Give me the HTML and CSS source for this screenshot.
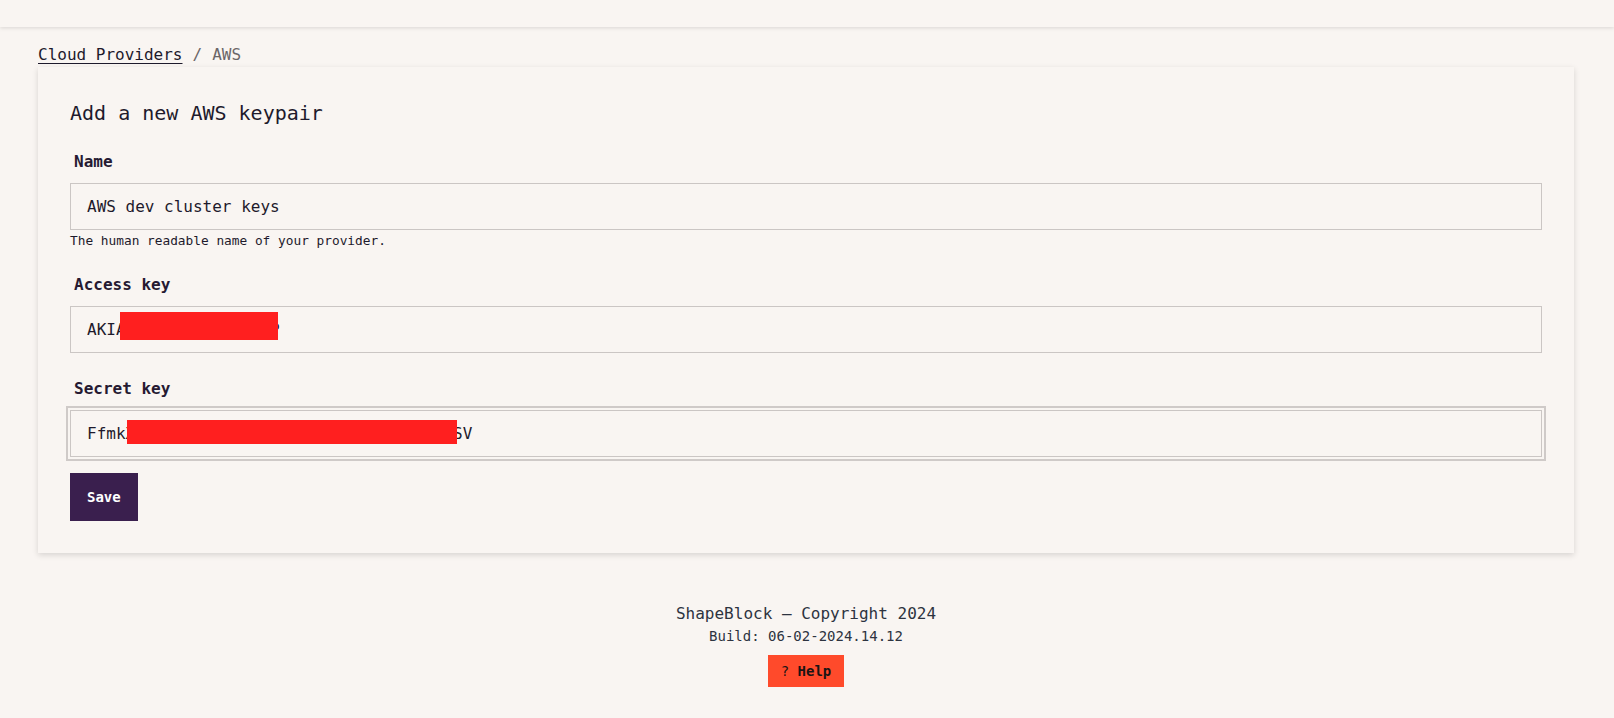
FILE: index.html
```html
<!DOCTYPE html>
<html lang="en">
<head>
<meta charset="utf-8">
<title>AWS keypair</title>
<link rel="stylesheet" href="styles.css">
</head>
<body>
<header class="topbar">
  <nav class="topnav">
    <span>Dashboard</span><span>Clusters</span><span>Services</span><span>Applications</span><span>Cloud Providers</span><span>Support</span>
  </nav>
</header>
<main class="main">
  <div class="breadcrumb"><a href="#" class="crumb-link">Cloud Providers</a><span class="crumb-sep">/</span><span class="crumb-current">AWS</span></div>
  <section class="card">
    <h1 class="card-title">Add a new AWS keypair</h1>
    <form class="form">
      <div class="field">
        <label class="label">Name</label>
        <input class="input" type="text" value="AWS dev cluster keys">
        <p class="hint">The human readable name of your provider.</p>
      </div>
      <div class="field">
        <label class="label">Access key</label>
        <div class="input-wrap">
          <input class="input" type="text" value="AKIAXXXXXXXXXXXXXXXP">
          <span class="redact redact-access"></span>
        </div>
      </div>
      <div class="field field-last">
        <label class="label">Secret key</label>
        <div class="input-wrap">
          <input class="input input-focus" type="text" value="FfmkXXXXXXXXXXXXXXXXXXXXXXXXXXXXXXXXXXSV">
          <span class="redact redact-secret"></span>
        </div>
      </div>
      <div class="actions"><button type="button" class="btn-save">Save</button></div>
    </form>
  </section>
  <footer class="footer">
    <div class="copyright">ShapeBlock — Copyright 2024</div>
    <div class="build">Build: 06-02-2024.14.12</div>
    <button type="button" class="btn-help"><span class="q">?</span> Help</button>
  </footer>
</main>
</body>
</html>
```
FILE: styles.css
```css
* { box-sizing: border-box; }
html, body {
  margin: 0;
  padding: 0;
  background: #f9f5f2;
  font-family: "DejaVu Sans Mono", "Liberation Mono", monospace;
  color: #1e1a2c;
}
.topbar {
  height: 27px;
  background: #f9f5f2;
  box-shadow: 0 1px 4px rgba(0, 0, 0, 0.13);
  overflow: hidden;
  position: relative;
  z-index: 2;
}
.topnav {
  display: flex;
  justify-content: center;
  gap: 12px;
  font-size: 13px;
  line-height: 18px;
  margin-top: -16px;
  color: #8a8588;
}
.main {
  padding: 16px 40px 0 38px;
}
.breadcrumb {
  font-size: 16px;
  line-height: 24px;
  height: 24px;
}
.crumb-link {
  color: #1e1a2c;
  text-decoration: underline;
  text-underline-offset: 3px;
}
.crumb-sep {
  color: #6b6668;
  margin: 0 10px;
}
.crumb-current { color: #6b6668; }
.card {
  background: #f9f5f2;
  box-shadow: 0 2px 6px rgba(0, 0, 0, 0.14);
  padding: 32px;
}
.card-title {
  margin: 0 0 23px 0;
  font-size: 20px;
  line-height: 28px;
  font-weight: normal;
  color: #1e1a2c;
}
.form { margin: 0; }
.field { margin-bottom: 24px; }
.field-last { margin-bottom: 16px; }
.label {
  display: block;
  padding-left: 4px;
  font-size: 16px;
  line-height: 24px;
  font-weight: bold;
  color: #261a32;
  margin-bottom: 9px;
}
.input-wrap { position: relative; }
.input {
  display: block;
  width: 100%;
  height: 47px;
  border: 1px solid #cbc6c4;
  border-radius: 0;
  background: #f9f5f2;
  padding: 0 16px;
  font-family: "DejaVu Sans Mono", "Liberation Mono", monospace;
  font-size: 16px;
  color: #1e1a2c;
  outline: none;
}
.input-focus {
  outline: 2px solid #cfcac8;
  outline-offset: 2px;
}
.hint {
  margin: 3px 0 0 0;
  font-size: 12.8px;
  line-height: 16px;
  color: #1e1a2c;
}
.redact {
  position: absolute;
  background: #ff1f1f;
}
.redact-access { left: 50px; top: 6px; width: 158px; height: 28px; }
.redact-secret { left: 57px; top: 10px; width: 330px; height: 24px; }
.actions { display: flex; }
.btn-save {
  height: 48px;
  padding: 0 17px;
  background: #3a1f4e;
  color: #ffffff;
  border: none;
  border-radius: 0;
  font-family: "DejaVu Sans Mono", "Liberation Mono", monospace;
  font-size: 14px;
  font-weight: bold;
}
.footer {
  display: flex;
  flex-direction: column;
  align-items: center;
  padding-top: 49px;
  color: #2d3340;
}
.copyright {
  font-size: 16px;
  line-height: 24px;
}
.build {
  font-size: 14px;
  line-height: 21px;
}
.btn-help {
  margin-top: 8px;
  height: 32px;
  padding: 0 13px;
  background: #ff4a2b;
  color: #1a1414;
  border: none;
  border-radius: 0;
  font-family: "DejaVu Sans Mono", "Liberation Mono", monospace;
  font-size: 14px;
  font-weight: bold;
}
.btn-help .q { font-weight: normal; }
```
